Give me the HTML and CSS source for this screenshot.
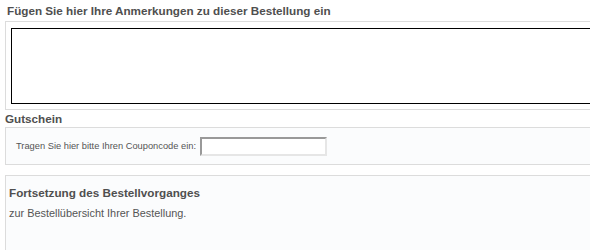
FILE: index.html
```html
<!DOCTYPE html>
<html lang="de">
<head>
  <meta charset="UTF-8">
  <title>Bestellung</title>
  <link rel="stylesheet" href="styles.css">
</head>
<body>
  <div class="checkout">
    <h3 class="section-title">Fügen Sie hier Ihre Anmerkungen zu dieser Bestellung ein</h3>
    <div class="box comments">
      <textarea name="comments"></textarea>
    </div>

    <h3 class="section-title coupon-title">Gutschein</h3>
    <div class="box tinted coupon">
      <label for="coupon">Tragen Sie hier bitte Ihren Couponcode ein:</label>
      <input type="text" id="coupon">
    </div>

    <div class="box tinted continue">
      <h4>Fortsetzung des Bestellvorganges</h4>
      <p>zur Bestellübersicht Ihrer Bestellung.</p>
    </div>
  </div>
</body>
</html>
```

FILE: styles.css
```css
* {
  box-sizing: border-box;
}

body {
  margin: 0;
  overflow: hidden;
  font-family: "Liberation Sans", Arial, sans-serif;
  color: #4f4f4f;
  background: #ffffff;
}

.checkout {
  width: 640px;
  padding-left: 5px;
}

.section-title {
  margin: 0;
  padding: 4px 0 0 2px;
  height: 21px;
  font-size: 11.7px;
  line-height: 13px;
  font-weight: bold;
  color: #4f4f4f;
}

.coupon-title {
  height: 17px;
  padding: 2px 0 0 0;
}

.box {
  border: 1px solid #dcdcdc;
}

.tinted {
  background: #fbfcfd;
}

.comments {
  height: 89px;
  padding: 6px 0 0 5px;
}

.comments textarea {
  display: block;
  width: 100%;
  height: 76px;
  border: 1px solid #000;
  resize: none;
  margin: 0;
}

.coupon {
  display: flex;
  align-items: center;
  height: 38px;
  padding-left: 10px;
}

.coupon label {
  font-size: 9.3px;
  color: #555;
  margin-right: 4px;
}

.coupon input {
  width: 127px;
  height: 19px;
  margin: 0;
  border: 2px solid #e6e6e6;
  border-top-color: #999;
  border-left-color: #999;
  background: #fff;
}

.continue {
  margin-top: 10px;
  height: 100px;
  padding: 10px 3px;
}

.continue h4 {
  margin: 0;
  font-size: 11.7px;
  line-height: 14px;
  color: #4f4f4f;
}

.continue p {
  margin: 6px 0 0;
  font-size: 10.9px;
  line-height: 14px;
  color: #555;
}
```
